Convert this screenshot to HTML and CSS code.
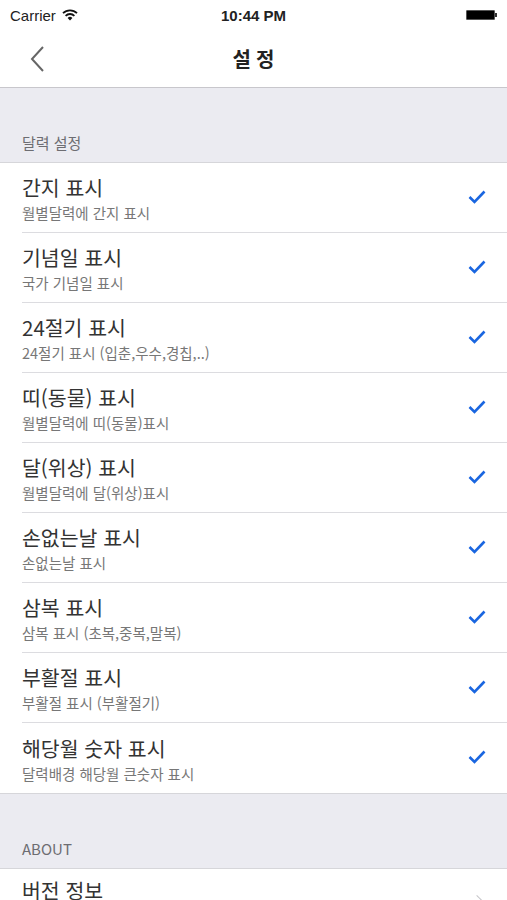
FILE: index.html
```html
<!DOCTYPE html>
<html lang="ko">
<head>
  <meta charset="UTF-8">
  <title>설정</title>
  <meta name="viewport" content="width=device-width, initial-scale=1">
  <link rel="stylesheet" href="styles.css">
</head>
<body>
  <div class="status-bar">
    <div class="carrier">Carrier
      <svg class="wifi" width="16" height="12" viewBox="0 0 16 12">
        <path d="M1 4.2 A10 10 0 0 1 15 4.2" fill="none" stroke="#111" stroke-width="1.8"/>
        <path d="M3.6 6.8 A6.3 6.3 0 0 1 12.4 6.8" fill="none" stroke="#111" stroke-width="1.8"/>
        <path d="M8 11.5 L5.6 9 A3.4 3.4 0 0 1 10.4 9 Z" fill="#111"/>
      </svg>
    </div>
    <div class="clock">10:44 PM</div>
    <div class="battery"><span class="battery-body"></span><span class="battery-nub"></span></div>
  </div>

  <div class="nav-bar">
    <svg class="back" width="16" height="28" viewBox="0 0 16 28">
      <path d="M14 2 L3 14 L14 26" fill="none" stroke="#666" stroke-width="2"/>
    </svg>
    <h1>설정</h1>
  </div>

  <div class="section-header">달력 설정</div>
  <ul class="group">
    <li class="row">
      <div class="text"><div class="title">간지 표시</div><div class="sub">월별달력에 간지 표시</div></div>
      <svg class="check" width="18" height="14" viewBox="0 0 18 14"><polyline points="1.5,7 6.5,12 16.5,1.5" fill="none" stroke="#1a66e0" stroke-width="2.6"/></svg>
    </li>
    <li class="row">
      <div class="text"><div class="title">기념일 표시</div><div class="sub">국가 기념일 표시</div></div>
      <svg class="check" width="18" height="14" viewBox="0 0 18 14"><polyline points="1.5,7 6.5,12 16.5,1.5" fill="none" stroke="#1a66e0" stroke-width="2.6"/></svg>
    </li>
    <li class="row">
      <div class="text"><div class="title">24절기 표시</div><div class="sub">24절기 표시 (입춘,우수,경칩,..)</div></div>
      <svg class="check" width="18" height="14" viewBox="0 0 18 14"><polyline points="1.5,7 6.5,12 16.5,1.5" fill="none" stroke="#1a66e0" stroke-width="2.6"/></svg>
    </li>
    <li class="row">
      <div class="text"><div class="title">띠(동물) 표시</div><div class="sub">월별달력에 띠(동물)표시</div></div>
      <svg class="check" width="18" height="14" viewBox="0 0 18 14"><polyline points="1.5,7 6.5,12 16.5,1.5" fill="none" stroke="#1a66e0" stroke-width="2.6"/></svg>
    </li>
    <li class="row">
      <div class="text"><div class="title">달(위상) 표시</div><div class="sub">월별달력에 달(위상)표시</div></div>
      <svg class="check" width="18" height="14" viewBox="0 0 18 14"><polyline points="1.5,7 6.5,12 16.5,1.5" fill="none" stroke="#1a66e0" stroke-width="2.6"/></svg>
    </li>
    <li class="row">
      <div class="text"><div class="title">손없는날 표시</div><div class="sub">손없는날 표시</div></div>
      <svg class="check" width="18" height="14" viewBox="0 0 18 14"><polyline points="1.5,7 6.5,12 16.5,1.5" fill="none" stroke="#1a66e0" stroke-width="2.6"/></svg>
    </li>
    <li class="row">
      <div class="text"><div class="title">삼복 표시</div><div class="sub">삼복 표시 (초복,중복,말복)</div></div>
      <svg class="check" width="18" height="14" viewBox="0 0 18 14"><polyline points="1.5,7 6.5,12 16.5,1.5" fill="none" stroke="#1a66e0" stroke-width="2.6"/></svg>
    </li>
    <li class="row">
      <div class="text"><div class="title">부활절 표시</div><div class="sub">부활절 표시 (부활절기)</div></div>
      <svg class="check" width="18" height="14" viewBox="0 0 18 14"><polyline points="1.5,7 6.5,12 16.5,1.5" fill="none" stroke="#1a66e0" stroke-width="2.6"/></svg>
    </li>
    <li class="row">
      <div class="text"><div class="title">해당월 숫자 표시</div><div class="sub">달력배경 해당월 큰숫자 표시</div></div>
      <svg class="check" width="18" height="14" viewBox="0 0 18 14"><polyline points="1.5,7 6.5,12 16.5,1.5" fill="none" stroke="#1a66e0" stroke-width="2.6"/></svg>
    </li>
  </ul>

  <div class="section-header">ABOUT</div>
  <ul class="group">
    <li class="row single">
      <div class="text"><div class="title">버전 정보</div></div>
      <span class="chevron"></span>
    </li>
  </ul>
</body>
</html>
```

FILE: styles.css
```css
* { box-sizing: border-box; margin: 0; padding: 0; }
body {
  font-family: 'Noto Sans CJK KR', 'Noto Sans', sans-serif;
  background: #ebebf1;
  width: 507px;
  height: 900px;
  overflow: hidden;
  color: #333;
}

.status-bar {
  height: 30px;
  background: #fff;
  display: flex;
  align-items: center;
  justify-content: space-between;
  padding: 0 10px;
  font-family: 'Liberation Sans', Arial, sans-serif;
  font-size: 15px;
  color: #222;
  position: relative;
}
.carrier { display: flex; align-items: center; gap: 6px; }
.clock {
  position: absolute;
  left: 0;
  right: 0;
  text-align: center;
  font-weight: bold;
  font-size: 15px;
}
.battery { display: flex; align-items: center; }
.battery-body {
  width: 29px;
  height: 10px;
  background: #000;
  border: 1px solid #555;
  border-radius: 1px;
}
.battery-nub { width: 2px; height: 4px; background: #333; }

.nav-bar {
  height: 58px;
  background: #fff;
  border-bottom: 1px solid #c8c7cc;
  display: flex;
  align-items: center;
  position: relative;
  padding-left: 29px;
}
.nav-bar h1 {
  position: absolute;
  left: 0;
  right: 0;
  text-align: center;
  font-size: 20px;
  font-weight: bold;
  color: #222;
  letter-spacing: 5px;
  text-indent: 5px;
}

.section-header {
  height: 75px;
  padding: 0 22px 9px;
  display: flex;
  align-items: flex-end;
  font-size: 15px;
  line-height: 20px;
  color: #6d6d72;
  border-bottom: 1px solid #d6d6da;
}

.group {
  list-style: none;
  background: #fff;
  border-bottom: 1px solid #d6d6da;
}
.row {
  height: 70px;
  margin-left: 22px;
  padding-right: 21px;
  display: flex;
  align-items: center;
  justify-content: space-between;
  border-bottom: 1px solid #dcdce0;
}
.row:last-child { border-bottom: none; }
.title {
  font-size: 20.5px;
  line-height: 30px;
  color: #333;
}
.sub {
  font-size: 14.5px;
  line-height: 21px;
  color: #777;
}

.check { margin-top: -2px; }
.chevron {
  width: 10px;
  height: 10px;
  border-right: 1.5px solid #c4c4c8;
  border-top: 1.5px solid #c4c4c8;
  transform: rotate(45deg);
  margin-top: 22px;
  margin-right: 4px;
}
.single { align-items: flex-start; padding-top: 6px; }
```
